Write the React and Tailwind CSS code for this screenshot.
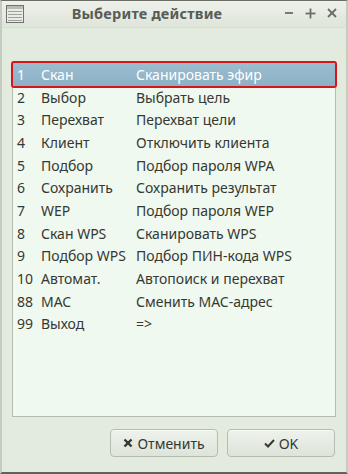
import React from "react";

const rows = [
  ["1", "Скан", "Сканировать эфир"],
  ["2", "Выбор", "Выбрать цель"],
  ["3", "Перехват", "Перехват цели"],
  ["4", "Клиент", "Отключить клиента"],
  ["5", "Подбор", "Подбор пароля WPA"],
  ["6", "Сохранить", "Сохранить результат"],
  ["7", "WEP", "Подбор пароля WEP"],
  ["8", "Скан WPS", "Сканировать WPS"],
  ["9", "Подбор WPS", "Подбор ПИН-кода WPS"],
  ["10", "Автомат.", "Автопоиск и перехват"],
  ["88", "MAC", "Сменить MAC-адрес"],
  ["99", "Выход", "=>"],
];

export default function App() {
  return (
    <div
      className="w-[348px] h-[474px] flex flex-col bg-[#e3ebdf] border-x-[2px] border-t border-b-[2px] border-x-[#c4ccc0] border-t-[#6b6f68] border-b-[#5f625d] overflow-hidden"
      style={{ fontFamily: '"Noto Sans", "Open Sans", sans-serif' }}
    >
      {/* title bar */}
      <div className="h-[27px] flex items-center bg-gradient-to-b from-[#eef1ea] to-[#dfe5db] border-b border-[#d8ded4] relative shrink-0">
        <svg width="18" height="18" viewBox="0 0 18 18" className="ml-[4px] shrink-0">
          <rect x="0.5" y="0.5" width="17" height="17" fill="#e9ebe6" stroke="#6f736c" />
          <rect x="1" y="1" width="16" height="3" fill="#b7bbb4" />
          <line x1="2" y1="6.5" x2="16" y2="6.5" stroke="#9ea29a" />
          <line x1="2" y1="9.5" x2="16" y2="9.5" stroke="#9ea29a" />
          <line x1="2" y1="12.5" x2="16" y2="12.5" stroke="#9ea29a" />
          <line x1="2" y1="15.5" x2="16" y2="15.5" stroke="#9ea29a" />
        </svg>
        <div className="flex-1 text-center text-[14.5px] leading-[20px] font-bold text-[#575c55] tracking-[0.2px] -ml-[14px] -mt-[2px]">
          Выберите действие
        </div>
        <div className="flex items-center gap-[11px] mr-[9px] -mt-[2px] text-[#6a6e67]">
          <svg width="10" height="10" viewBox="0 0 10 10"><line x1="1" y1="5" x2="9" y2="5" stroke="currentColor" strokeWidth="1.8" /></svg>
          <svg width="11" height="11" viewBox="0 0 11 11"><line x1="0.5" y1="5.5" x2="10.5" y2="5.5" stroke="currentColor" strokeWidth="1.8" /><line x1="5.5" y1="0.5" x2="5.5" y2="10.5" stroke="currentColor" strokeWidth="1.8" /></svg>
          <svg width="10" height="10" viewBox="0 0 10 10"><line x1="1" y1="1" x2="9" y2="9" stroke="currentColor" strokeWidth="1.8" /><line x1="9" y1="1" x2="1" y2="9" stroke="currentColor" strokeWidth="1.8" /></svg>
        </div>
      </div>

      {/* body */}
      <div className="flex-1 flex flex-col px-[10px] pt-[33px]">
        <div className="h-[356px] bg-[#f0f9ef] border border-[#b4bdb0] pt-[1px]">
          {rows.map((r, i) => {
            const sel = i === 0;
            return (
              <div
                key={r[0]}
                className={
                  "h-[22.7px] flex items-center text-[14px] " +
                  (sel
                    ? "bg-gradient-to-b from-[#9bbdd0] to-[#8cb0c5] text-white outline-[2.5px] outline-solid outline-[#d8151b] rounded-[1px]"
                    : "text-[#353833]")
                }
              >
                <span className="w-[28px] pl-[4px] shrink-0">{r[0]}</span>
                <span className="w-[95px] shrink-0 whitespace-nowrap">{r[1]}</span>
                <span className="whitespace-nowrap">{r[2]}</span>
              </div>
            );
          })}
        </div>

        <div className="flex justify-end gap-[9px] mt-[12px] pr-[1px]">
          <button className="w-[108px] h-[28px] rounded-[4px] border border-[#b6bcb2] bg-gradient-to-b from-[#eef2eb] to-[#dde4d9] flex items-center justify-center gap-[4px] text-[14px] text-[#353833] shadow-[inset_0_1px_0_#f8faf6]">
            <svg width="10" height="10" viewBox="0 0 10 10"><line x1="1.5" y1="1.5" x2="8.5" y2="8.5" stroke="#353833" strokeWidth="2.4" /><line x1="8.5" y1="1.5" x2="1.5" y2="8.5" stroke="#353833" strokeWidth="2.4" /></svg>
            Отменить
          </button>
          <button className="w-[108px] h-[28px] rounded-[4px] border border-[#b6bcb2] bg-gradient-to-b from-[#eef2eb] to-[#dde4d9] flex items-center justify-center gap-[4px] text-[14px] text-[#353833] shadow-[inset_0_1px_0_#f8faf6]">
            <svg width="11" height="9" viewBox="0 0 11 9"><path d="M1 4.5 L4 7.5 L10 1" fill="none" stroke="#353833" strokeWidth="2" /></svg>
            OK
          </button>
        </div>
      </div>
    </div>
  );
}
